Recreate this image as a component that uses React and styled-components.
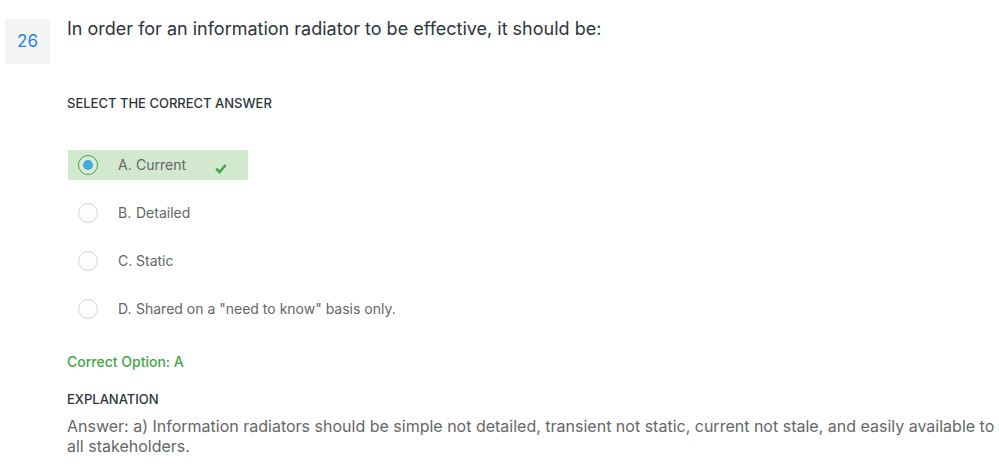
import React, { useState } from "react";
import styled, { createGlobalStyle } from "styled-components";

const GlobalStyle = createGlobalStyle`
  *, *::before, *::after { box-sizing: border-box; }
  body {
    margin: 0;
    background: #fff;
    color: #666;
    font-family: Inter, "Noto Sans", sans-serif;
  }
`;

const Question = styled.main`
  display: flex;
  align-items: flex-start;
  gap: 17px;
  padding: 19px 2px 12px 5px;
`;

const QuestionNumber = styled.div`
  display: flex;
  flex: none;
  align-items: center;
  justify-content: center;
  width: 45px;
  height: 45px;
  padding-bottom: 2px;
  background: #f4f4f4;
  color: #1c84ee;
  font-size: 17px;
`;

const Content = styled.div`
  flex: 1;
  min-width: 0;
`;

const Title = styled.h1`
  margin: 0 0 54px;
  color: #2d353c;
  font-size: 18px;
  font-weight: 400;
  line-height: 20px;
`;

const Answers = styled.fieldset`
  margin: 0;
  padding: 0;
  border: 0;
`;

const Legend = styled.legend`
  margin-bottom: 37px;
  padding: 0;
  color: #2d353c;
  font-size: 13px;
  font-weight: 500;
  line-height: 20px;
`;

const OptionList = styled.div`
  display: flex;
  flex-direction: column;
  align-items: flex-start;
  gap: 18px;
  padding-left: 1px;
`;

const Option = styled.label`
  display: flex;
  align-items: center;
  min-width: 180px;
  min-height: 30px;
  padding: 0 10px;
  background: ${({ $correct }) => ($correct ? "#d2e9cf" : "transparent")};
  font-size: 14px;
  line-height: 20px;
  cursor: pointer;
`;

const Radio = styled.input`
  appearance: none;
  display: grid;
  flex: none;
  place-content: center;
  width: 20px;
  height: 20px;
  margin: 0 20px 0 0;
  border: 1px solid #d2d2d2;
  border-radius: 50%;
  background: #fff;

  &:checked {
    border-color: #43a047;
    background: #d9edd6;
  }

  &:checked::before {
    content: "";
    width: 10px;
    height: 10px;
    border-radius: 50%;
    background: #48a8e0;
  }
`;

const Letter = styled.span`
  flex: none;
  width: 18px;
`;

const CheckMark = styled.svg`
  flex: none;
  width: 12px;
  height: 10px;
  margin: 8px 11px 0 auto;
`;

const CorrectOption = styled.p`
  margin: 28px 0 17px;
  color: #43a546;
  font-size: 14px;
  font-weight: 500;
  line-height: 20px;
`;

const Heading = styled.h2`
  margin: 0 0 7px;
  color: #2d353c;
  font-size: 13px;
  font-weight: 500;
  line-height: 20px;
`;

const Explanation = styled.p`
  margin: 0;
  font-size: 16px;
  line-height: 20px;
`;

const options = [
  { letter: "A", text: "Current", correct: true },
  { letter: "B", text: "Detailed" },
  { letter: "C", text: "Static" },
  { letter: "D", text: 'Shared on a "need to know" basis only.' },
];

export default function App() {
  const [selected, setSelected] = useState("A");

  return (
    <>
      <GlobalStyle />
      <Question>
        <QuestionNumber>26</QuestionNumber>
        <Content>
          <Title>In order for an information radiator to be effective, it should be:</Title>
          <Answers>
            <Legend>SELECT THE CORRECT ANSWER</Legend>
            <OptionList>
              {options.map(({ letter, text, correct }) => (
                <Option key={letter} $correct={correct}>
                  <Radio
                    type="radio"
                    name="answer"
                    value={letter}
                    checked={selected === letter}
                    onChange={() => setSelected(letter)}
                  />
                  <Letter>{letter}.</Letter>
                  <span>{text}</span>
                  {correct && (
                    <CheckMark viewBox="0 0 12 10" aria-hidden="true">
                      <path d="M1.2 4.8 4.6 8 10.6 1" fill="none" stroke="#43a546" strokeWidth="2.6" />
                    </CheckMark>
                  )}
                </Option>
              ))}
            </OptionList>
          </Answers>
          <CorrectOption>Correct Option: A</CorrectOption>
          <Heading>EXPLANATION</Heading>
          <Explanation>
            Answer: a) Information radiators should be simple not detailed, transient not static,
            current not stale, and easily available to all stakeholders.
          </Explanation>
        </Content>
      </Question>
    </>
  );
}
